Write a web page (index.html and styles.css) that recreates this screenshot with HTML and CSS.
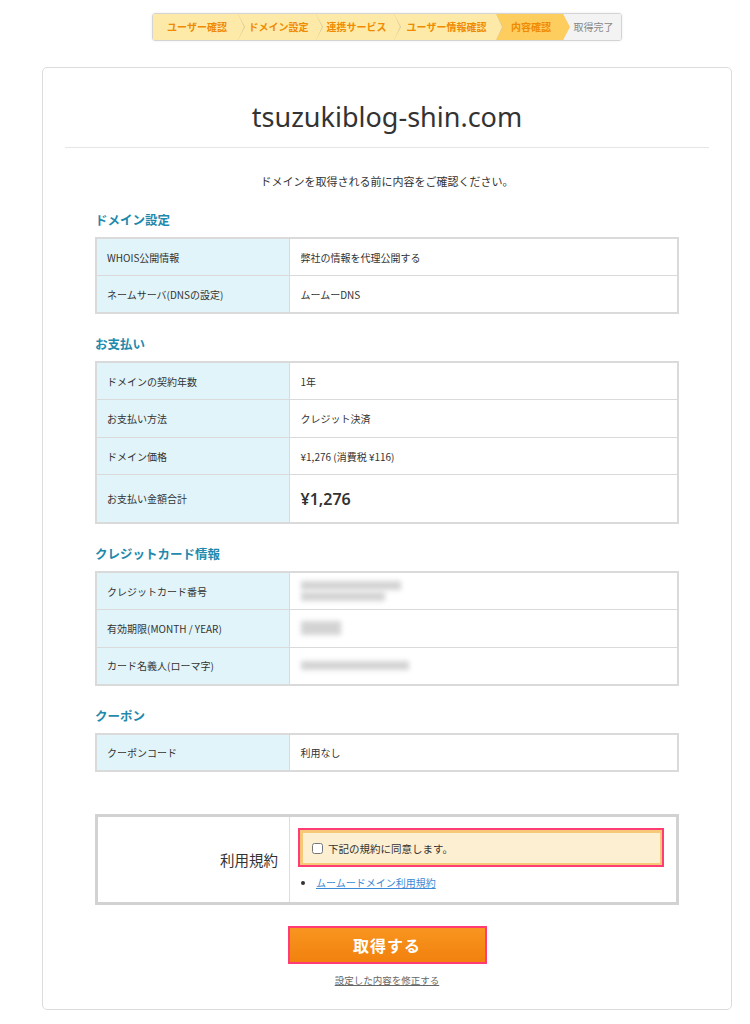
FILE: index.html
```html
<!DOCTYPE html>
<html lang="ja">
<head>
<meta charset="UTF-8" />
<meta name="viewport" content="width=device-width, initial-scale=1" />
<title>内容確認 | ムームードメイン</title>
<link rel="stylesheet" href="styles.css">
</head>
<body>

<div class="wrap">
  <ol class="steps">
    <li class="step done s1">ユーザー確認</li>
    <li class="step done s2">ドメイン設定</li>
    <li class="step done s3">連携サービス</li>
    <li class="step done s4">ユーザー情報確認</li>
    <li class="step current s5">内容確認</li>
    <li class="step todo">取得完了</li>
  </ol>

  <div class="card">
    <h1 class="domain">tsuzukiblog-shin.com</h1>
    <p class="lead">ドメインを取得される前に内容をご確認ください。</p>

    <div class="body">
      <h3 class="sec-title first">ドメイン設定</h3>
      <table class="info">
        <tr><th>WHOIS公開情報</th><td>弊社の情報を代理公開する</td></tr>
        <tr><th>ネームサーバ(DNSの設定)</th><td>ムームーDNS</td></tr>
      </table>

      <h3 class="sec-title">お支払い</h3>
      <table class="info">
        <tr><th>ドメインの契約年数</th><td>1年</td></tr>
        <tr><th>お支払い方法</th><td>クレジット決済</td></tr>
        <tr><th>ドメイン価格</th><td>¥1,276 (消費税 ¥116)</td></tr>
        <tr class="total"><th>お支払い金額合計</th><td><strong>¥1,276</strong></td></tr>
      </table>

      <h3 class="sec-title">クレジットカード情報</h3>
      <table class="info">
        <tr><th>クレジットカード番号</th><td><span class="masked w100"></span><span class="masked w80 second"></span></td></tr>
        <tr><th>有効期限(MONTH / YEAR)</th><td><span class="masked w40"></span></td></tr>
        <tr><th>カード名義人(ローマ字)</th><td><span class="masked w110"></span></td></tr>
      </table>

      <h3 class="sec-title">クーポン</h3>
      <table class="info">
        <tr><th>クーポンコード</th><td>利用なし</td></tr>
      </table>

      <table class="terms">
        <tr>
          <th>利用規約</th>
          <td>
            <div class="agree-outer">
              <label class="agree"><input type="checkbox"> 下記の規約に同意します。</label>
            </div>
            <ul class="terms-links">
              <li><a href="#">ムームードメイン利用規約</a></li>
            </ul>
          </td>
        </tr>
      </table>

      <div class="actions">
        <button class="submit">取得する</button>
        <a class="back" href="#">設定した内容を修正する</a>
      </div>
    </div>
  </div>
</div>

</body>
</html>
```

FILE: styles.css
```css
body {
  margin: 0;
  background: #fff;
  color: #333;
  font-family: "Noto Sans CJK JP", "Noto Sans", sans-serif;
}
.wrap {
  width: 690px;
  margin-left: 42px;
  padding-top: 13px;
}

/* step bar */
.steps {
  display: flex;
  list-style: none;
  margin: 0 auto;
  padding: 0;
  width: 470px;
  height: 28px;
  border: 1px solid #d4d4d4;
  border-radius: 3px;
  box-shadow: 0 0 3px rgba(0,0,0,0.08);
  overflow: hidden;
  box-sizing: border-box;
}
.step {
  position: relative;
  height: 26px;
  line-height: 26px;
  font-size: 10px;
  font-weight: bold;
  color: #f08a00;
  padding-left: 3px;
  text-align: center;
  white-space: nowrap;
  box-sizing: border-box;
}
.s1 { width: 85px; }
.s2 { width: 78px; }
.s3 { width: 78px; }
.s4 { width: 102px; }
.s5 { width: 67px; }
.step.done { background: #fdeaa8; }
.step.current { background: #fdcd5e; }
.step.todo {
  flex: 1;
  background: #f3f3f3;
  color: #888;
  font-weight: normal;
}
.step.done::before, .step.current::before,
.step.done::after, .step.current::after {
  content: "";
  position: absolute;
  top: 0;
  height: 26px;
  z-index: 1;
  clip-path: polygon(0 0, 100% 50%, 0 100%);
}
.step.done::before, .step.current::before {
  right: -7px;
  width: 7px;
  background: #d9c99a;
}
.step.done::after, .step.current::after {
  right: -6px;
  width: 6px;
}
.step.done::after { background: #fdeaa8; }
.step.current::before { background: #fdcd5e; }
.step.current::after { background: #fdcd5e; }

/* card */
.card {
  margin-top: 26px;
  border: 1px solid #dcdcdc;
  border-radius: 5px;
  padding: 31px 22px 22px;
}
.domain {
  margin: 0;
  padding-bottom: 12px;
  border-bottom: 1px solid #e6e6e6;
  font-family: "Noto Sans", sans-serif;
  font-size: 27px;
  font-weight: normal;
  line-height: 36px;
  text-align: center;
  color: #333;
}
.lead {
  margin: 24px 0 0;
  font-size: 11px;
  line-height: 18px;
  text-align: center;
}
.body {
  padding: 0 30px;
}
.sec-title {
  margin: 21px 0 8px;
  font-size: 12.5px;
  line-height: 18px;
  color: #1f8aad;
}
.sec-title.first { margin-top: 21px; }

.info {
  width: 100%;
  border-collapse: collapse;
  border: 2px solid #dadada;
  font-size: 10px;
}
.info th, .info td {
  height: 37.6px;
  padding: 0 11px;
  border: 1px solid #dadada;
  text-align: left;
  font-weight: normal;
  box-sizing: border-box;
}
.info th {
  width: 193px;
  padding-left: 10px;
  background: #e1f4f9;
}
.info td { background: #fff; }
.info tr.total th, .info tr.total td { height: 48px; }
.info strong {
  font-family: "Noto Sans", sans-serif;
  font-size: 16px;
  font-weight: 600;
}

/* blurred card data */
.masked {
  display: block;
  height: 9px;
  background: #c9c9c9;
  filter: blur(2.5px);
  opacity: 0.8;
}
.masked.second { margin-top: 2px; }
.w100 { width: 100px; }
.w80 { width: 84px; }
.w40 { width: 40px; height: 14px; }
.w110 { width: 108px; }

/* terms */
.terms {
  width: 100%;
  margin-top: 42px;
  border-collapse: collapse;
  border: 3px solid #d2d2d2;
}
.terms th {
  width: 193px;
  padding: 0 11px;
  border-right: 1px solid #dedede;
  text-align: right;
  font-size: 14.5px;
  font-weight: normal;
  box-sizing: border-box;
}
.terms td {
  padding: 11px 12px 12px 8px;
}
.agree-outer {
  border: 2px solid #ff3d74;
}
.agree {
  display: flex;
  align-items: center;
  gap: 3px;
  height: 30px;
  padding: 0 9px;
  border: 3px solid #f6c878;
  border-right-width: 2px;
  border-bottom-width: 2px;
  background: #fdefd2;
  font-size: 10.5px;
}
.agree input {
  width: 11px;
  height: 11px;
  margin: 0 2px 0 0;
}
.terms-links {
  margin: 8px 0 0;
  padding-left: 18px;
  font-size: 10px;
}
.terms-links a {
  color: #3a8ad6;
}

/* actions */
.actions {
  display: flex;
  flex-direction: column;
  align-items: center;
  margin-top: 21px;
}
.submit {
  width: 199px;
  height: 38px;
  border: 2px solid #ff3d74;
  background: linear-gradient(#f89520, #f2810e);
  color: #fff;
  font-family: "Noto Sans CJK JP", sans-serif;
  font-size: 16px;
  font-weight: bold;
  letter-spacing: 1px;
  cursor: pointer;
}
.back {
  margin-top: 9px;
  font-size: 9.5px;
  color: #666;
}
```
